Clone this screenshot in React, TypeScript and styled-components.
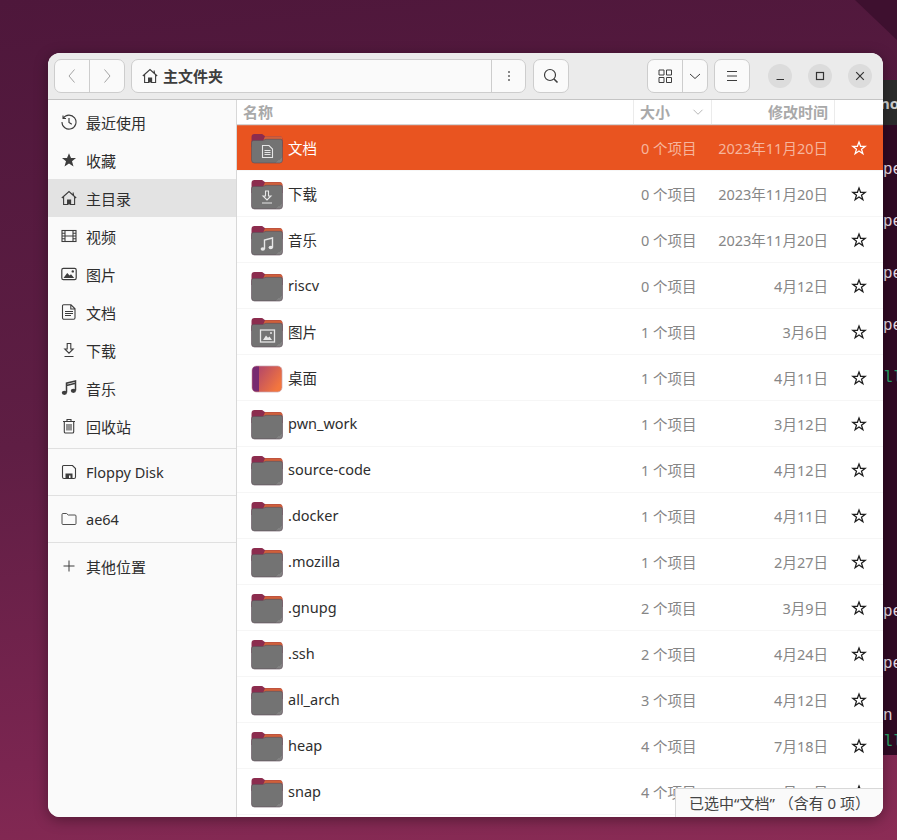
import React from "react"
import styled, { createGlobalStyle } from "styled-components"

const GlobalStyle = createGlobalStyle`
    html, body {
        margin: 0;
        padding: 0;
        background: #4a1538;
    }
    * {
        box-sizing: border-box;
    }
`

const FONT = `"Noto Sans", "Noto Sans CJK SC", sans-serif`

const Desktop = styled.div`
    position: relative;
    width: 897px;
    height: 840px;
    overflow: hidden;
    font-family: ${FONT};
    background: linear-gradient(174deg, #4e173b 0%, #5f1e44 48%, #7a2550 82%, #8b2c55 100%);

    &::before {
        content: "";
        position: absolute;
        top: 0;
        right: 0;
        width: 42px;
        height: 40px;
        background: #3e102f;
        clip-path: polygon(0 0, 100% 0, 100% 100%);
    }
`

const Terminal = styled.div`
    position: absolute;
    left: 780px;
    top: 80px;
    width: 117px;
    height: 675px;
    background: #300a24;
    overflow: hidden;
    font-family: "Liberation Mono", monospace;
    font-size: 16px;
    color: #e6dbe2;
`

const TerminalBar = styled.div`
    height: 45px;
    background: #2c2c2c;
    color: #cfcfcf;
    font-family: ${FONT};
    font-weight: 700;
    font-size: 15px;
    line-height: 46px;
    padding-left: 100px;
    white-space: nowrap;
`

const TerminalBody = styled.div`
    padding-top: 32px;
`

const TerminalLine = styled.div<{ $green?: boolean }>`
    height: 26px;
    line-height: 26px;
    padding-left: 103px;
    white-space: nowrap;
    color: ${(p) => (p.$green ? "#26a269" : "#e6dbe2")};
`

const Window = styled.div`
    position: absolute;
    left: 48px;
    top: 53px;
    width: 835px;
    height: 764px;
    border-radius: 12px;
    overflow: hidden;
    background: #fff;
    box-shadow: 0 3px 14px rgba(0, 0, 0, 0.35);
    display: flex;
    flex-direction: column;
`

const Toolbar = styled.header`
    flex: 0 0 47px;
    display: flex;
    align-items: center;
    padding: 0 11px 1px 6px;
    background: #ebebeb;
    border-bottom: 1px solid #c4c4c4;
`

const ButtonGroup = styled.div<{ $width: number; $left?: number }>`
    display: flex;
    width: ${(p) => p.$width}px;
    margin-left: ${(p) => p.$left ?? 0}px;
    height: 34px;
    background: #fafafa;
    border: 1px solid #cdcdcd;
    border-radius: 7px;
    overflow: hidden;
`

const ToolButton = styled.div<{ $width?: number; $divider?: boolean; $muted?: boolean }>`
    flex: ${(p) => (p.$width ? `0 0 ${p.$width}px` : "1")};
    display: flex;
    align-items: center;
    justify-content: center;
    color: ${(p) => (p.$muted ? "#a3a3a3" : "#3d3d3d")};
    border-right: ${(p) => (p.$divider ? "1px solid #cdcdcd" : "none")};
`

const PathBar = styled.div`
    flex: 1;
    display: flex;
    align-items: center;
    gap: 5px;
    padding-left: 10px;
    font-size: 15px;
    font-weight: 700;
    color: #3d3d3d;
    border-right: 1px solid #cdcdcd;
`

const WindowControls = styled.div`
    display: flex;
    gap: 16px;
    margin-left: 18px;
`

const RoundControl = styled.div`
    width: 24px;
    height: 24px;
    border-radius: 50%;
    background: #dcdcdc;
    color: #333;
    display: flex;
    align-items: center;
    justify-content: center;
`

const Body = styled.div`
    flex: 1;
    min-height: 0;
    display: flex;
`

const Sidebar = styled.nav`
    flex: 0 0 189px;
    padding-top: 3px;
    background: #fafafa;
    border-right: 1px solid #d8d8d8;
`

const SidebarItem = styled.div<{ $active?: boolean }>`
    height: 38px;
    display: flex;
    align-items: center;
    padding-left: 13px;
    gap: 9px;
    font-size: 15px;
    color: #2e2e2e;
    background: ${(p) => (p.$active ? "#e3e3e3" : "transparent")};
`

const SidebarLatin = styled.span`
    font-size: 14.5px;
`

const SidebarIcon = styled.span`
    width: 16px;
    height: 16px;
    display: flex;
    color: #3d3d3d;
`

const SidebarRule = styled.div<{ $tight?: boolean }>`
    height: 1px;
    margin: ${(p) => (p.$tight ? "3px" : "4px")} 0 4px;
    background: #e0e0e0;
`

const Content = styled.main`
    position: relative;
    flex: 1;
    min-width: 0;
    display: flex;
    flex-direction: column;
    overflow: hidden;
`

const COLUMNS = "397px 78px 123px 48px"

const ColumnHeader = styled.div`
    flex: 0 0 25px;
    display: grid;
    grid-template-columns: ${COLUMNS};
    border-bottom: 1px solid #d4d4d4;
    background: #fff;
    font-size: 15px;
    font-weight: 700;
    color: #a9a9a9;
    line-height: 24px;
`

const ColumnCell = styled.div<{ $right?: boolean; $last?: boolean }>`
    display: flex;
    align-items: center;
    justify-content: ${(p) => (p.$right ? "flex-end" : "space-between")};
    padding: ${(p) => (p.$right ? "0 6px 0 0" : "0 7px 0 6px")};
    border-right: ${(p) => (p.$last ? "none" : "1px solid #ebebeb")};
`

const FileList = styled.div`
    flex: 1;
    overflow: hidden;
`

const Row = styled.div<{ $selected?: boolean }>`
    height: 46px;
    display: grid;
    grid-template-columns: ${COLUMNS};
    align-items: center;
    font-size: 14.5px;
    background: ${(p) => (p.$selected ? "#e95420" : "#fff")};
    border-bottom: 1px solid #f6f6f6;
    box-shadow: ${(p) => (p.$selected ? "inset 0 1px 0 #e0714d" : "none")};
    color: ${(p) => (p.$selected ? "#fff" : "#2e2e2e")};
`

const NameCell = styled.div`
    display: flex;
    align-items: center;
    gap: 5px;
    padding-left: 14px;
`

const FileName = styled.span<{ $latin?: boolean }>`
    padding-bottom: ${(p) => (p.$latin ? "2px" : "0")};
`

const SizeCell = styled.div<{ $selected?: boolean }>`
    padding-left: 7px;
    white-space: nowrap;
    color: ${(p) => (p.$selected ? "#f6b59d" : "#868686")};
`

const DateCell = styled(SizeCell)`
    padding: 0 7px 0 0;
    text-align: right;
`

const StarCell = styled.div<{ $selected?: boolean }>`
    display: flex;
    justify-content: center;
    color: ${(p) => (p.$selected ? "#fff" : "#1e1e1e")};
`

const StatusBar = styled.div`
    position: absolute;
    right: 0;
    bottom: 0;
    width: 208px;
    height: 29px;
    padding-left: 13px;
    font-size: 15px;
    line-height: 28px;
    white-space: nowrap;
    color: #444;
    background: #fafafa;
    border-top: 1px solid #d8d8d8;
    border-left: 1px solid #d8d8d8;
`

const Svg = styled.svg.attrs({ fill: "none", stroke: "currentColor", strokeWidth: 1, viewBox: "0 0 16 16" })`
    width: 16px;
    height: 16px;
    display: block;
`

const IconHome = () => (
    <Svg>
        <path d="M0.8 8 8 1.5 15.2 8M2.6 6.6V14.5h4V10h3v4.5h4V6.6M12.2 2.5v2.8" strokeWidth={1.1} />
        <rect x="6.5" y="10" width="3.5" height="4.5" fill="currentColor" stroke="none" />
    </Svg>
)
const IconRecent = () => (
    <Svg>
        <path d="M2.2 4.2A7 7 0 1 1 1 8M2 1.5v3h3" strokeWidth={1.1} />
        <path d="M8 4v4.4l2.8 1.8" strokeWidth={1.2} />
    </Svg>
)
const IconStarFill = () => (
    <Svg>
        <path d="M8 1.2 10 6h5l-4 3.3 1.5 5.2L8 11.5l-4.5 3L5 9.3 1 6h5z" fill="currentColor" stroke="none" />
    </Svg>
)
const IconVideo = () => (
    <Svg>
        <rect x="1" y="2.5" width="14" height="11" strokeWidth={1.1} />
        <path d="M4 2.5v11M12 2.5v11M4 8h8M1 5.2h3M1 8h3M1 10.8h3M12 5.2h3M12 8h3M12 10.8h3" strokeWidth={1.1} />
    </Svg>
)
const IconPicture = () => (
    <Svg>
        <rect x="0.8" y="2.3" width="14.4" height="11.4" rx="1.6" strokeWidth={1.2} />
        <path d="M2.5 12 6.2 7l2.4 2.6 1.4-1.4 3.2 3.8z" fill="currentColor" stroke="none" />
        <circle cx="11.8" cy="5.4" r="1.2" fill="currentColor" stroke="none" />
    </Svg>
)
const IconDoc = () => (
    <Svg>
        <path d="M2.5 0.8h7.5l4 4v9a1.4 1.4 0 0 1-1.4 1.4H2.9a1.4 1.4 0 0 1-1.4-1.4V1.8a1 1 0 0 1 1-1zM9.8 0.8V5H14M4 7.5h8M4 9.5h8M4 11.5h6" strokeWidth={1.1} />
    </Svg>
)
const IconDownload = () => (
    <Svg>
        <path d="M6.2 1.5h3.6v5.5h2.4L8 11.2 3.8 7h2.4zM3.5 14.5h9" strokeWidth={1.1} />
    </Svg>
)
const IconMusic = () => (
    <Svg>
        <path d="M5.5 12.5V3.2L14.5 1v9.5M5.5 5.4 14.5 3.2" strokeWidth={1.5} />
        <ellipse cx="3.4" cy="12.8" rx="2.6" ry="2.1" fill="currentColor" stroke="none" />
        <ellipse cx="12.4" cy="10.8" rx="2.6" ry="2.1" fill="currentColor" stroke="none" />
    </Svg>
)
const IconTrash = () => (
    <Svg>
        <path d="M2 3.5h12M6 3.5V1.5h4v2M3.3 3.5v10.2a1.3 1.3 0 0 0 1.3 1.3h6.8a1.3 1.3 0 0 0 1.3-1.3V3.5M6 6v6.5M8 6v6.5M10 6v6.5" strokeWidth={1.1} />
    </Svg>
)
const IconDisk = () => (
    <Svg>
        <path d="M2.5 1.5h9l3 3v8.5a1.5 1.5 0 0 1-1.5 1.5H3A1.5 1.5 0 0 1 1.5 13V2.5a1 1 0 0 1 1-1z" strokeWidth={1.1} />
        <path d="M4.5 14.5V9.5h7v5H9.5V11.5H8v3z" fill="currentColor" stroke="none" />
    </Svg>
)
const IconFolderLine = () => (
    <Svg>
        <path d="M1 3.5a1 1 0 0 1 1-1h3.5L7.3 4H14a1 1 0 0 1 1 1v7.5a1 1 0 0 1-1 1H2a1 1 0 0 1-1-1z" strokeWidth={0.9} />
    </Svg>
)
const IconPlus = () => (
    <Svg>
        <path d="M8 2.5v11M2.5 8h11" strokeWidth={1} />
    </Svg>
)
const IconBack = () => (
    <Svg>
        <path d="M10.5 1.5 5 8l5.5 6.5" />
    </Svg>
)
const IconForward = () => (
    <Svg>
        <path d="M5.5 1.5 11 8l-5.5 6.5" />
    </Svg>
)
const IconKebab = () => (
    <Svg>
        <path d="M8 3.2v1.6M8 7.2v1.6M8 11.2v1.6" strokeWidth={1.6} />
    </Svg>
)
const IconSearch = () => (
    <Svg>
        <circle cx="7" cy="7" r="5.5" strokeWidth={1.2} />
        <path d="m11 11 3.5 3.5" strokeWidth={1.6} />
    </Svg>
)
const IconGrid = () => (
    <Svg>
        <path d="M2 2h5v5H2zM9.5 2h5v5h-5zM2 9.5h5v5H2zM9.5 9.5h5v5h-5z" />
    </Svg>
)
const IconChevron = () => (
    <Svg>
        <path d="m3 6 5 4.5L13 6" />
    </Svg>
)
const IconMenu = () => (
    <Svg>
        <path d="M3 3.5h10M3 8h10M3 12.5h10" />
    </Svg>
)
const IconMin = () => (
    <Svg>
        <path d="M4.5 11.5h7.5" strokeWidth={1.2} />
    </Svg>
)
const IconMax = () => (
    <Svg>
        <rect x="4.5" y="4.5" width="7" height="7" strokeWidth={1.2} />
    </Svg>
)
const IconClose = () => (
    <Svg>
        <path d="m4.2 4.2 7.6 7.6M11.8 4.2l-7.6 7.6" strokeWidth={1.2} />
    </Svg>
)
const IconStarLine = () => (
    <Svg>
        <path d="M8 2 9.6 6.3h4.6l-3.7 2.9 1.4 4.6L8 11.1l-3.9 2.7 1.4-4.6-3.7-2.9h4.6z" strokeWidth={1.25} />
    </Svg>
)
const IconChevronSmall = () => (
    <svg width="12" height="12" viewBox="0 0 16 16" fill="none" stroke="#b5b5b5" strokeWidth="1.3">
        <path d="m2 5 6 6 6-6" />
    </svg>
)

type Emblem = "doc" | "down" | "music" | "pic"

const FolderIcon: React.FC<{ emblem?: Emblem; id: string }> = ({ emblem, id }) => (
    <svg width="32" height="32" viewBox="0 0 32 32" style={{ flex: "none" }}>
        <defs>
            <linearGradient id={`${id}-f`} x1="0" y1="0" x2="1" y2="1">
                <stop offset="0.88" stopColor="#737373" />
                <stop offset="0.88" stopColor="#808080" />
                <stop offset="1" stopColor="#868686" />
            </linearGradient>
        </defs>
        <path d="M0.5 5a3 3 0 0 1 3-3h7c1.8 0 2.2 2 4 2h13.5a3.5 3.5 0 0 1 3.5 3.5V15H0.5z" fill="#8c2c4e" />
        <path d="M14 4.2h14.5a2.5 2.5 0 0 1 2.8 2.6V9H12z" fill="#d0603a" />
        <path d="M0.5 10.5a2 2 0 0 1 2-2h9c1.5 0 2-1.2 3.5-1.2h14.5a2 2 0 0 1 2 2V28a3 3 0 0 1-3 3H3.5a3 3 0 0 1-3-3z" fill={`url(#${id}-f)`} stroke="#5e4b57" strokeWidth="0.6" />
        <g fill="none" stroke="#e6e6e6" strokeWidth="1.1">
            {emblem === "doc" && (
                <path d="M11.5 13.5h6.5l3.5 3.5v8.5h-10zM13.5 18.5h6M13.5 20.5h6M13.5 22.5h6" />
            )}
            {emblem === "down" && (
                <path d="M14.5 13h3v5h2.5L16 22l-4-4h2.5zM11 25h10" />
            )}
            {emblem === "music" && (
                <>
                    <path d="M13.5 25v-9l8-2v9.5" strokeWidth="1.4" />
                    <ellipse cx="11.8" cy="25" rx="2.2" ry="1.8" fill="#e6e6e6" stroke="none" />
                    <ellipse cx="19.8" cy="23.5" rx="2.2" ry="1.8" fill="#e6e6e6" stroke="none" />
                </>
            )}
            {emblem === "pic" && (
                <>
                    <rect x="9.5" y="14" width="14" height="12" strokeWidth="1.3" />
                    <path d="M12 24l3-4.5 2 2.2 1.5-1.2 2.5 3.5z" fill="#e6e6e6" stroke="none" />
                    <circle cx="20" cy="17" r="1" fill="#e6e6e6" stroke="none" />
                </>
            )}
        </g>
    </svg>
)

const DesktopFolderIcon: React.FC = () => (
    <svg width="32" height="32" viewBox="0 0 32 32" style={{ flex: "none" }}>
        <defs>
            <linearGradient id="desk" x1="0" y1="0" x2="1" y2="0.6">
                <stop offset="0" stopColor="#a63d72" />
                <stop offset="1" stopColor="#f3763e" />
            </linearGradient>
        </defs>
        <rect x="1" y="4" width="30" height="26" rx="4.5" fill="url(#desk)" stroke="#c9a6b2" strokeWidth="0.7" />
        <path d="M1.4 8.5a4 4 0 0 1 4-4h2.6v25H5.4a4 4 0 0 1-4-4z" fill="#772a70" />
    </svg>
)

const sidebarTop = [
    { label: "最近使用", icon: <IconRecent /> },
    { label: "收藏", icon: <IconStarFill /> },
    { label: "主目录", icon: <IconHome />, active: true },
    { label: "视频", icon: <IconVideo /> },
    { label: "图片", icon: <IconPicture /> },
    { label: "文档", icon: <IconDoc /> },
    { label: "下载", icon: <IconDownload /> },
    { label: "音乐", icon: <IconMusic /> },
    { label: "回收站", icon: <IconTrash /> },
]

type FileRow = { name: string; size: string; date: string; emblem?: Emblem; desktop?: boolean; latin?: boolean }

const files: FileRow[] = [
    { name: "文档", size: "0 个项目", date: "2023年11月20日", emblem: "doc" },
    { name: "下载", size: "0 个项目", date: "2023年11月20日", emblem: "down" },
    { name: "音乐", size: "0 个项目", date: "2023年11月20日", emblem: "music" },
    { name: "riscv", size: "0 个项目", date: "4月12日", latin: true },
    { name: "图片", size: "1 个项目", date: "3月6日", emblem: "pic" },
    { name: "桌面", size: "1 个项目", date: "4月11日", desktop: true },
    { name: "pwn_work", size: "1 个项目", date: "3月12日", latin: true },
    { name: "source-code", size: "1 个项目", date: "4月12日", latin: true },
    { name: ".docker", size: "1 个项目", date: "4月11日", latin: true },
    { name: ".mozilla", size: "1 个项目", date: "2月27日", latin: true },
    { name: ".gnupg", size: "2 个项目", date: "3月9日", latin: true },
    { name: ".ssh", size: "2 个项目", date: "4月24日", latin: true },
    { name: "all_arch", size: "3 个项目", date: "4月12日", latin: true },
    { name: "heap", size: "4 个项目", date: "7月18日", latin: true },
    { name: "snap", size: "4 个项目", date: "4月12日", latin: true },
]

const terminalLines: Array<[string, boolean?]> = [
    ["pe"], [""], ["pe"], [""], ["pe"], [""], ["pe"], [""], ["ll", true],
    [""], [""], [""], [""], [""], [""], [""], [""],
    ["pe"], [""], ["pe"], [""], ["n"], ["ll", true],
]

export default function App() {
    return (
        <Desktop>
            <GlobalStyle />
            <Terminal>
                <TerminalBar>no</TerminalBar>
                <TerminalBody>
                    {terminalLines.map(([text, green], i) => (
                        <TerminalLine key={i} $green={green}>{text}</TerminalLine>
                    ))}
                </TerminalBody>
            </Terminal>
            <Window>
                <Toolbar>
                    <ButtonGroup $width={71}>
                        <ToolButton $divider $muted><IconBack /></ToolButton>
                        <ToolButton $muted><IconForward /></ToolButton>
                    </ButtonGroup>
                    <ButtonGroup $width={395} $left={6}>
                        <PathBar><IconHome />主文件夹</PathBar>
                        <ToolButton $width={33}><IconKebab /></ToolButton>
                    </ButtonGroup>
                    <ButtonGroup $width={36} $left={7}>
                        <ToolButton><IconSearch /></ToolButton>
                    </ButtonGroup>
                    <ButtonGroup $width={61} $left={78}>
                        <ToolButton $width={35} $divider><IconGrid /></ToolButton>
                        <ToolButton><IconChevron /></ToolButton>
                    </ButtonGroup>
                    <ButtonGroup $width={36} $left={6}>
                        <ToolButton><IconMenu /></ToolButton>
                    </ButtonGroup>
                    <WindowControls>
                        <RoundControl><IconMin /></RoundControl>
                        <RoundControl><IconMax /></RoundControl>
                        <RoundControl><IconClose /></RoundControl>
                    </WindowControls>
                </Toolbar>
                <Body>
                    <Sidebar>
                        {sidebarTop.map((item) => (
                            <SidebarItem key={item.label} $active={item.active}>
                                <SidebarIcon>{item.icon}</SidebarIcon>
                                {item.label}
                            </SidebarItem>
                        ))}
                        <SidebarRule $tight />
                        <SidebarItem>
                            <SidebarIcon><IconDisk /></SidebarIcon>
                            <SidebarLatin>Floppy Disk</SidebarLatin>
                        </SidebarItem>
                        <SidebarRule />
                        <SidebarItem>
                            <SidebarIcon><IconFolderLine /></SidebarIcon>
                            <SidebarLatin>ae64</SidebarLatin>
                        </SidebarItem>
                        <SidebarRule />
                        <SidebarItem>
                            <SidebarIcon><IconPlus /></SidebarIcon>
                            其他位置
                        </SidebarItem>
                    </Sidebar>
                    <Content>
                        <ColumnHeader>
                            <ColumnCell>名称</ColumnCell>
                            <ColumnCell>大小<IconChevronSmall /></ColumnCell>
                            <ColumnCell $right>修改时间</ColumnCell>
                            <ColumnCell $last />
                        </ColumnHeader>
                        <FileList>
                            {files.map((file, i) => (
                                <Row key={file.name + i} $selected={i === 0}>
                                    <NameCell>
                                        {file.desktop ? <DesktopFolderIcon /> : <FolderIcon id={`folder${i}`} emblem={file.emblem} />}
                                        <FileName $latin={file.latin}>{file.name}</FileName>
                                    </NameCell>
                                    <SizeCell $selected={i === 0}>{file.size}</SizeCell>
                                    <DateCell $selected={i === 0}>{file.date}</DateCell>
                                    <StarCell $selected={i === 0}><IconStarLine /></StarCell>
                                </Row>
                            ))}
                        </FileList>
                        <StatusBar>已选中“文档” （含有 0 项）</StatusBar>
                    </Content>
                </Body>
            </Window>
        </Desktop>
    )
}
